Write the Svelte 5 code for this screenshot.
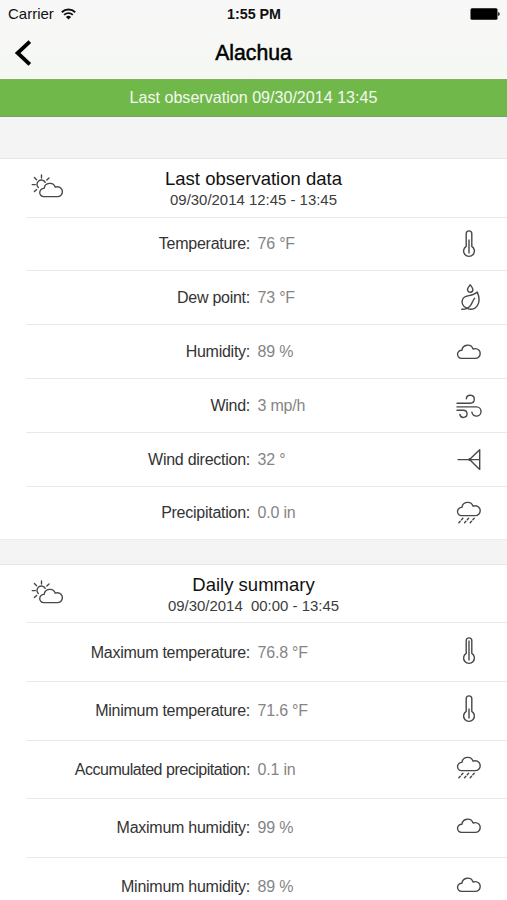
<script>
    let sections = [
        {
            title: "Last observation data",
            period: "09/30/2014 12:45 - 13:45",
            rows: [
                { label: "Temperature", value: "76 °F", icon: "thermometer" },
                { label: "Dew point", value: "73 °F", icon: "dew" },
                { label: "Humidity", value: "89 %", icon: "cloud" },
                { label: "Wind", value: "3 mp/h", icon: "wind" },
                { label: "Wind direction", value: "32 °", icon: "vane" },
                { label: "Precipitation", value: "0.0 in", icon: "rain" }
            ]
        },
        {
            title: "Daily summary",
            period: "09/30/2014  00:00 - 13:45",
            tall: true,
            rows: [
                { label: "Maximum temperature", value: "76.8 °F", icon: "thermometer-high" },
                { label: "Minimum temperature", value: "71.6 °F", icon: "thermometer-low" },
                { label: "Accumulated precipitation", value: "0.1 in", icon: "rain" },
                { label: "Maximum humidity", value: "99 %", icon: "cloud" },
                { label: "Minimum humidity", value: "89 %", icon: "cloud" }
            ]
        }
    ];

    // top of the mercury line inside the bulb thermometer
    let mercury = { "thermometer": 11, "thermometer-high": 5, "thermometer-low": 15 };

    let cloud = "M7.4 21.4H21.3a4.9 4.9 0 0 0 0-9.8q-1.1 0-2.2.4A5.8 5.8 0 0 0 7.9 13.2A4.1 4.1 0 0 0 7.4 21.4z";
</script>

<div class="screen">
    <header>
        <div class="status-bar">
            <div class="carrier">
                <span>Carrier</span>
                <svg width="15" height="12" viewBox="0 0 15 12" fill="none" stroke="#111" stroke-width="1.9">
                    <path d="M0.8 4.2a9.6 9.6 0 0 1 13.4 0" />
                    <path d="M3.2 6.9a6.1 6.1 0 0 1 8.6 0" />
                    <path d="M7.5 11.6L4.9 8.9a3.8 3.8 0 0 1 5.2 0z" fill="#111" stroke="none" />
                </svg>
            </div>
            <div class="time">1:55 PM</div>
            <div class="battery">
                <svg width="30" height="12" viewBox="0 0 30 12">
                    <rect x="0.5" y="0.3" width="27" height="11.4" rx="1.5" />
                    <path d="M28.2 4v4q1.5-.5 1.5-2t-1.5-2z" />
                </svg>
            </div>
        </div>
        <div class="nav">
            <button class="back" aria-label="Back">
                <svg width="18" height="26" viewBox="0 0 18 26" fill="none" stroke="#000" stroke-width="3.8">
                    <path d="M15.8 1.6L3.6 13l12.2 11.4" />
                </svg>
            </button>
            <h1>Alachua</h1>
        </div>
    </header>

    <div class="banner">Last observation 09/30/2014 13:45</div>

    {#each sections as section}
        <section class:tall={section.tall}>
            <div class="section-head">
                <svg class="sun" width="34" height="26" viewBox="0 0 34 26">
                    <path d="M8.3 13.6A4.4 4.4 0 1 1 15.2 8.3" />
                    <path d="M11.5 .9v3.2M4.4 3.6l2.2 2.2M19 3.9l-2.2 2.1M2.2 10.6h3.1M4.4 17.6l2.2-2.2" />
                    <path d={cloud} transform="translate(6.2 1.2)" />
                </svg>
                <h2>{section.title}</h2>
                <p>{section.period}</p>
            </div>
            {#each section.rows as row}
                <div class="row">
                    <span class="label" class:tight={row.label.length > 20}>{row.label}:</span>
                    <span class="value">{row.value}</span>
                    <svg class="icon" width="30" height="30" viewBox="0 0 30 30">
                        {#if mercury[row.icon]}
                            <path d="M12.2 17.4V4.7a2.8 2.8 0 0 1 5.6 0v12.7a5.4 5.4 0 1 1-5.6 0z" />
                            <path d={`M15 ${mercury[row.icon]}V24`} />
                        {:else if row.icon === "dew"}
                            <path d="M16.2 1.8c-1.6 2.2-2.7 3.5-2.7 4.7a2.7 2.7 0 0 0 5.4 0c0-1.2-1.1-2.5-2.7-4.7z" />
                            <path d="M7.8 26.3c4.5.1 7-1.3 8.8-3.9 1.6-2.4 2-4.4 4.1-7.2" />
                            <path d="M12.5 24.9c-4.3-1.6-5.6-6-3.5-9.4 2.5-4 9.5-1.7 14.2-6.6 2.2 5 2.4 10.4 0 14-2.5 3.6-6.9 4.1-9.7 2.4" />
                        {:else if row.icon === "wind"}
                            <path d="M3 12.2h13.4a4 4 0 1 0-4.1-4.5" />
                            <path d="M3 15.9h19.6a4.6 4.6 0 1 1-4.7 5.3" />
                            <path d="M3 19.2h6.4a3.6 3.6 0 1 1-3.5 4.3" />
                        {:else if row.icon === "vane"}
                            <path d="M4 14.6h21.7M25.7 4.8v19.6L15.5 14.6z" />
                            <circle cx="15.8" cy="14.6" r="0.8" />
                        {:else if row.icon === "rain"}
                            <path d={cloud} transform="translate(0 -3.8)" />
                            <path class="drops" d="M8.9 20.2l-4.3 4.8M14.6 20.2l-4.3 4.8M20.2 20.2l-4.3 4.8" />
                        {:else}
                            <path d={cloud} />
                        {/if}
                    </svg>
                </div>
            {/each}
        </section>
    {/each}
</div>

<style>
:global(body) {
    margin: 0;
}

.screen {
    height: 900px;
    overflow: hidden;
    background: #f4f4f4;
    color: #111;
    font-family: "Liberation Sans", Arial, sans-serif;
}

header {
    height: 79px;
    background: linear-gradient(#f7f7f7, #f7f8f6 50%, #f4f7f2);
}

.status-bar {
    display: grid;
    grid-template-columns: 1fr auto 1fr;
    align-items: center;
    height: 28px;
    padding: 0 7px 0 8px;
    font-size: 15px;
}

.carrier {
    display: flex;
    align-items: center;
    gap: 7px;
    margin-top: -1px;
}

.time {
    font-size: 14.3px;
    font-weight: bold;
}

.battery {
    display: flex;
    justify-content: flex-end;
    margin-top: -1px;
}

.nav {
    display: grid;
    grid-template-columns: 1fr auto 1fr;
    align-items: center;
    height: 49px;
}

.back {
    justify-self: start;
    display: flex;
    margin-left: 14px;
    padding: 0;
    border: none;
    background: none;
}

h1 {
    margin: 0;
    font-size: 21.2px;
    font-weight: normal;
    color: #000;
    -webkit-text-stroke: 0.5px #000;
}

.banner {
    box-sizing: border-box;
    height: 38px;
    border-top: 1px solid #7faf60;
    border-bottom: 1px solid #7aa066;
    background: #71b84b;
    color: #f3f9ef;
    font-size: 16.1px;
    line-height: 34px;
    text-align: center;
}

section {
    margin-top: 41px;
    border-top: 1px solid #e6e6e6;
    border-bottom: 1px solid #ececec;
    background: #fff;
}

section.tall {
    margin-top: 23.4px;
}

.section-head {
    position: relative;
    height: 57.6px;
    text-align: center;
}

.sun {
    position: absolute;
    left: 30px;
    top: 15px;
}

h2 {
    margin: 0;
    padding-top: 8px;
    font-size: 18.5px;
    font-weight: normal;
    line-height: 23px;
}

p {
    margin: 0;
    color: #3c3c3c;
    font-size: 14.95px;
    line-height: 19px;
    white-space: pre;
}

.row {
    display: grid;
    grid-template-columns: 224px 1fr 30px;
    column-gap: 7.5px;
    align-items: center;
    box-sizing: border-box;
    height: 53.8px;
    margin-left: 26px;
    padding: 1px 23px 0 0;
    border-top: 1px solid #e9e9e9;
    font-size: 16px;
}

.tall .row {
    height: 58.6px;
}

.label {
    color: #333;
    letter-spacing: -0.26px;
    text-align: right;
}

.label.tight {
    letter-spacing: -0.48px;
}

.value {
    color: #858585;
    letter-spacing: -0.2px;
}

.tall .icon {
    margin-top: -4px;
}

.icon,
.sun {
    fill: none;
    stroke: #484848;
    stroke-width: 1.4;
    stroke-linecap: round;
    stroke-linejoin: round;
}

.drops {
    stroke-dasharray: 2 2;
}
</style>
